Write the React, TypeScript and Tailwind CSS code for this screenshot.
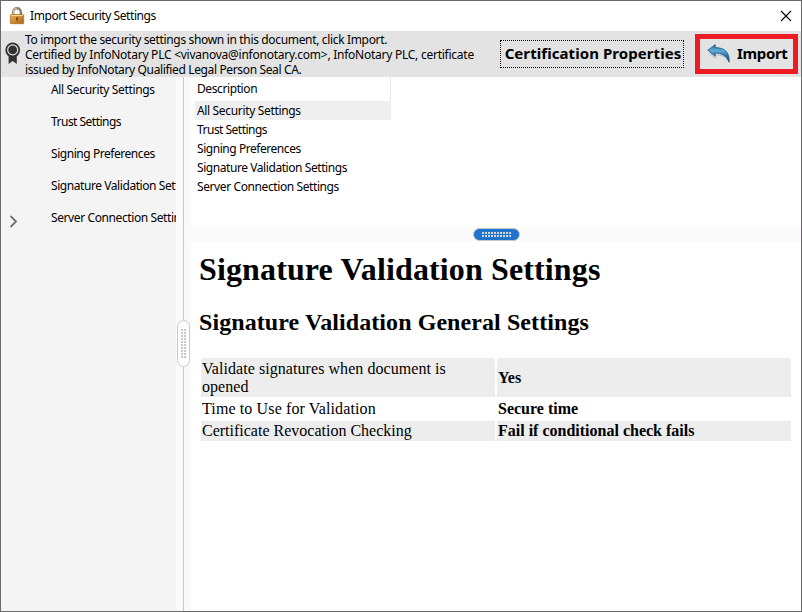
import { useState } from 'react';

const sections = [
  { name: 'All Security Settings', tracking: 'tracking-[-0.34px]' },
  { name: 'Trust Settings', tracking: 'tracking-[-0.52px]' },
  { name: 'Signing Preferences', tracking: 'tracking-[-0.45px]' },
  { name: 'Signature Validation Settings', tracking: 'tracking-[-0.43px]' },
  { name: 'Server Connection Settings', tracking: 'tracking-[-0.4px]' },
];

const rows = [
  { label: 'Validate signatures when document is opened', value: 'Yes', height: 'h-[39px]', tracking: 'tracking-[0.06px] pr-8' },
  { label: 'Time to Use for Validation', value: 'Secure time', height: 'h-5', tracking: 'tracking-[0.12px]' },
  { label: 'Certificate Revocation Checking', value: 'Fail if conditional check fails', height: 'h-5', tracking: '' },
];

function LockIcon() {
  return (
    <svg width="16" height="18" viewBox="0 0 16 18" className="shrink-0">
      <defs>
        <linearGradient id="lockBody" x1="0" y1="0" x2="1" y2="1">
          <stop offset="0" stopColor="#e9b45c" />
          <stop offset="0.5" stopColor="#cd8a30" />
          <stop offset="1" stopColor="#a5641a" />
        </linearGradient>
      </defs>
      <path d="M4.2 9V5a3.8 3.8 0 0 1 7.6 0V9" fill="none" stroke="#8b7f6c" strokeWidth="2.4" />
      <path d="M4.2 8V5a3.8 3.8 0 0 1 3.6-3.8" fill="none" stroke="#dcd3c1" strokeWidth="1" />
      <rect x="1.3" y="7.5" width="13.4" height="9.2" rx="1" fill="url(#lockBody)" stroke="#a9661a" strokeWidth="0.7" />
      <path d="M2 8.5h12" stroke="#f7d58c" />
      <circle cx="8" cy="11.3" r="1.1" fill="#5e3706" />
      <path d="M7.5 11.5h1v2.5h-1z" fill="#5e3706" />
    </svg>
  );
}

function BadgeIcon() {
  return (
    <svg width="16" height="23" viewBox="0 0 16 23" className="-mt-px shrink-0">
      <path d="M3.6 12v10l4.1-2.9 4.1 2.9V12z" fill="#323232" />
      <circle cx="7.7" cy="7.9" r="7.4" fill="#323232" />
      <circle cx="7.7" cy="7.9" r="5" fill="none" stroke="#e3e3e3" strokeWidth="1.2" />
    </svg>
  );
}

function ImportIcon() {
  return (
    <svg width="24" height="21" viewBox="0 0 24 21" className="shrink-0">
      <defs>
        <linearGradient id="arrowFill" x1="0" y1="0" x2="0" y2="1">
          <stop offset="0" stopColor="#1f6ea3" />
          <stop offset="0.35" stopColor="#62abd8" />
          <stop offset="0.65" stopColor="#2672a8" />
          <stop offset="1" stopColor="#1f5077" />
        </linearGradient>
      </defs>
      <path d="M2 9 8.5 14v-3.4c6 0 11 1.7 14 7.4" fill="none" stroke="#c3c6c9" strokeWidth="1.2" />
      <path d="M.8 6.2 8.2.6v3C16.8 3.6 22.9 7.6 22.1 18.2 19.4 11.7 15 9.2 8.2 9v3.2z" fill="url(#arrowFill)" stroke="#1d5a88" strokeWidth="0.8" />
    </svg>
  );
}

export default function App() {
  const [selected, setSelected] = useState(0);

  return (
    <div className="flex h-[612px] w-[802px] flex-col overflow-hidden border border-[#6b696b] bg-white font-['Noto_Sans',sans-serif] text-xs text-black">
      <div className="flex h-[30px] shrink-0 items-center pl-2 pr-[9px]">
        <LockIcon />
        <span className="ml-[5px] flex-1 whitespace-nowrap tracking-[-0.43px]">Import Security Settings</span>
        <button className="-mt-px flex size-3 items-center justify-center" aria-label="Close">
          <svg width="12" height="12" viewBox="0 0 12 12">
            <path d="M1 1l10 10M11 1L1 11" stroke="#000" strokeWidth="1.1" />
          </svg>
        </button>
      </div>

      <div className="flex h-[46px] shrink-0 items-center bg-[#e3e3e3] pl-1 pr-[3px]">
        <BadgeIcon />
        <div className="ml-1 w-[475px] whitespace-nowrap leading-[15px]">
          <p className="tracking-[-0.34px]">To import the security settings shown in this document, click Import.</p>
          <p className="tracking-[-0.25px]">Certified by InfoNotary PLC &lt;vivanova@infonotary.com&gt;, InfoNotary PLC, certificate</p>
          <p className="tracking-[-0.36px]">issued by InfoNotary Qualified Legal Person Seal CA.</p>
        </div>
        <button className="flex h-7 w-[184px] shrink-0 items-center justify-center whitespace-nowrap border border-dotted border-black pb-0.5 pl-0.5 text-[15px] font-bold tracking-[0.07px]">
          Certification Properties
        </button>
        <button className="ml-[11px] flex h-10 w-[103px] shrink-0 items-center border-5 border-[#ed1c24] pl-[7px] text-[15px] font-bold tracking-[-0.35px]">
          <ImportIcon />
          <span className="ml-1.5 pb-0.5">Import</span>
        </button>
      </div>

      <div className="flex min-h-0 flex-1">
        <aside className="flex w-[175px] shrink-0 overflow-hidden bg-[#f4f4f4]">
          <div className="w-[50px] shrink-0 pl-2 pt-[138px]">
            <svg width="9" height="13" viewBox="0 0 9 13">
              <path d="M1.5 1l5.5 5.5L1.5 12" fill="none" stroke="#707070" strokeWidth="1.8" />
            </svg>
          </div>
          <ul className="whitespace-nowrap pt-[5px]">
            {sections.map(({ name, tracking }) => (
              <li key={name} className={`h-8 leading-4 ${tracking}`}>{name}</li>
            ))}
          </ul>
        </aside>

        {/* vertical splitter */}
        <div className="flex w-[15px] shrink-0 flex-col items-center bg-[#fafafa]">
          <div className="h-[243px] w-px bg-[#c8c8c8]" />
          <div className="flex h-[47px] w-[13px] shrink-0 items-center justify-center rounded-full border border-[#cacaca] bg-white">
            <div className="grid grid-cols-2 gap-px">
              {Array.from({ length: 20 }, (_, i) => (
                <i key={i} className="size-0.5 bg-[#c8c8c8]" />
              ))}
            </div>
          </div>
          <div className="w-px flex-1 bg-[#c8c8c8]" />
        </div>

        <main className="flex min-w-0 flex-1 flex-col">
          <div className="h-[150px] shrink-0 pl-1">
            <div className="h-6 w-[196px] border-r border-[#e5e5e5] pl-0.5 leading-[24px] tracking-[-0.4px]">Description</div>
            {sections.map(({ name, tracking }, i) => (
              <div
                key={name}
                onClick={() => setSelected(i)}
                className={`h-[19px] w-[196px] whitespace-nowrap pl-0.5 leading-[19px] ${tracking} ${i === selected ? 'bg-[#efefef]' : ''}`}
              >
                {name}
              </div>
            ))}
          </div>

          {/* horizontal splitter */}
          <div className="flex h-[15px] shrink-0 items-start justify-center bg-[#fafafa] pt-px">
            <div className="flex h-[13px] w-[47px] items-center justify-center rounded-full border border-[#c8c8c8] bg-[#1f74cb]">
              <div className="grid grid-cols-10 gap-px">
                {Array.from({ length: 20 }, (_, i) => (
                  <i key={i} className="size-0.5 bg-[#d5d5d5]" />
                ))}
              </div>
            </div>
          </div>

          <div className="flex-1 pl-2 pr-2 font-['Liberation_Serif',serif]">
            <h1 className="pt-[9px] text-[32px] font-bold leading-[37px] tracking-[0.13px]">Signature Validation Settings</h1>
            <h2 className="mt-[20px] text-2xl font-bold leading-[28px] tracking-[0.08px]">Signature Validation General Settings</h2>
            <table className="mt-[20px] w-[594px] table-fixed border-separate border-spacing-0.5 text-base leading-[18px]">
              <tbody>
                {rows.map((row) => (
                  <tr key={row.label} className={`odd:bg-[#ededed] ${row.height}`}>
                    <td className={`py-px pl-px ${row.tracking}`}>{row.label}</td>
                    <td className="px-px py-px font-bold">{row.value}</td>
                  </tr>
                ))}
              </tbody>
            </table>
          </div>
        </main>
      </div>
    </div>
  );
}
